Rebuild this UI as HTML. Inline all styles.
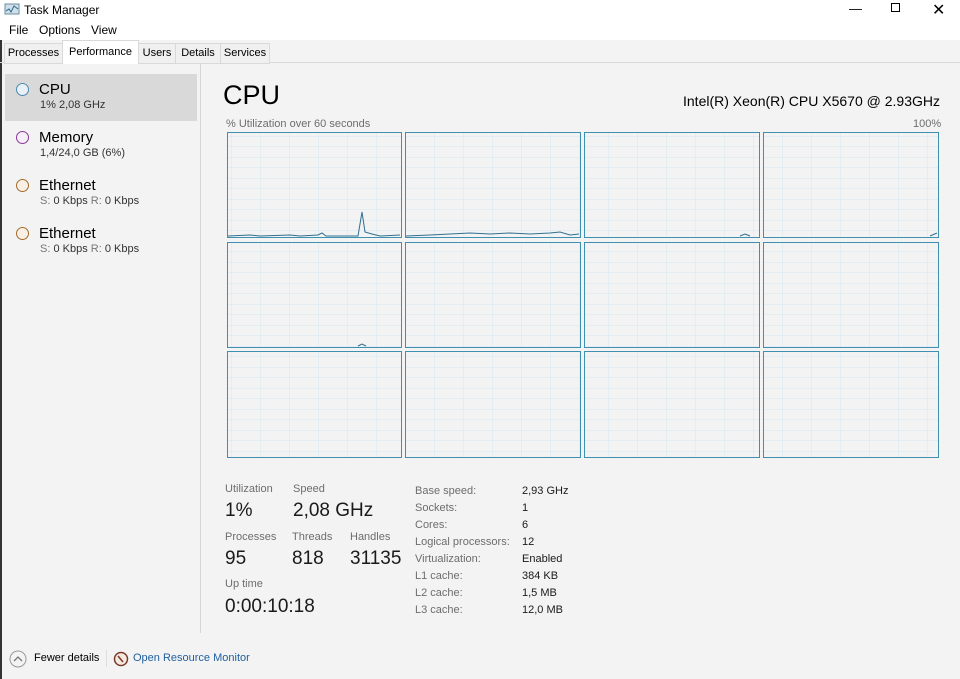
<!DOCTYPE html>
<html><head><meta charset="utf-8"><style>
body{margin:0;width:960px;height:679px;background:#f3f3f3;font-family:"Liberation Sans",sans-serif;position:relative;overflow:hidden;color:#000}
.a{position:absolute;white-space:nowrap}
.g{color:#6d6d6d;font-size:11px}
.v{font-size:19px;color:#1a1a1a}
.k{font-size:11px;color:#6d6d6d}
.kv{font-size:11px;color:#1a1a1a}
.circ{position:absolute;width:11px;height:11px;border-radius:50%;border:1px solid}
</style></head><body>
<div class="a" style="left:0;top:0;width:2px;height:679px;background:#333"></div>
<div class="a" style="left:0;top:0;width:960px;height:40px;background:#fff"></div>
<svg class="a" style="left:4px;top:3px" width="16" height="14"><rect x="1" y="1" width="14" height="10" fill="#cfe0ea" stroke="#6a8ca0"/><polyline points="2,8 5,6 7,9 10,3 14,6" fill="none" stroke="#2a6a8a"/></svg>
<div class="a" style="left:24px;top:3px;font-size:12px">Task Manager</div>
<div class="a" style="left:849px;top:1px;font-size:13px">&#8212;</div>
<div class="a" style="left:891px;top:3px;width:7px;height:7px;border:1px solid #000"></div>
<div class="a" style="left:932px;top:0px;font-size:16px">&#10005;</div>
<div class="a" style="left:9px;top:23px;font-size:12px">File</div>
<div class="a" style="left:39px;top:23px;font-size:12px">Options</div>
<div class="a" style="left:91px;top:23px;font-size:12px">View</div>
<div class="a" style="left:0;top:62px;width:960px;height:1px;background:#d9d9d9"></div>
<div class="a" style="left:4px;top:43px;width:57px;height:19px;background:#f0f0f0;border:1px solid #d9d9d9;font-size:11px;line-height:19px;text-align:center">Processes</div>
<div class="a" style="left:62px;top:40px;width:75px;height:23px;background:#fff;border:1px solid #d9d9d9;border-bottom:none;font-size:11px;line-height:22px;text-align:center">Performance</div>
<div class="a" style="left:138px;top:43px;width:36px;height:19px;background:#f0f0f0;border:1px solid #d9d9d9;font-size:11px;line-height:19px;text-align:center">Users</div>
<div class="a" style="left:175px;top:43px;width:44px;height:19px;background:#f0f0f0;border:1px solid #d9d9d9;font-size:11px;line-height:19px;text-align:center">Details</div>
<div class="a" style="left:220px;top:43px;width:48px;height:19px;background:#f0f0f0;border:1px solid #d9d9d9;font-size:11px;line-height:19px;text-align:center">Services</div>
<div class="a" style="left:200px;top:63px;width:1px;height:570px;background:#d6d6d6"></div>
<div class="a" style="left:5px;top:74px;width:192px;height:47px;background:#d9d9d9"></div>
<div class="circ" style="left:16px;top:83px;border-color:#4a8ab0;background:#e8f0f6"></div>
<div class="a" style="left:39px;top:81px;font-size:15px">CPU</div>
<div class="a" style="left:40px;top:99px;font-size:11px;color:#333">1% 2,08 GHz</div>
<div class="circ" style="left:16px;top:131px;border-color:#8b3a9a;background:#f6eef8"></div>
<div class="a" style="left:39px;top:129px;font-size:15px">Memory</div>
<div class="a" style="left:40px;top:147px;font-size:11px;color:#333">1,4/24,0 GB (6%)</div>
<div class="circ" style="left:16px;top:179px;border-color:#a66a2a;background:#f8f0e6"></div>
<div class="a" style="left:39px;top:177px;font-size:15px">Ethernet</div>
<div class="a" style="left:40px;top:195px;font-size:11px;color:#333"><span style="color:#777">S:</span> 0 Kbps <span style="color:#777">R:</span> 0 Kbps</div>
<div class="circ" style="left:16px;top:227px;border-color:#a66a2a;background:#f8f0e6"></div>
<div class="a" style="left:39px;top:225px;font-size:15px">Ethernet</div>
<div class="a" style="left:40px;top:243px;font-size:11px;color:#333"><span style="color:#777">S:</span> 0 Kbps <span style="color:#777">R:</span> 0 Kbps</div>
<div class="a" style="left:223px;top:80px;font-size:27px">CPU</div>
<div class="a" style="left:683px;top:93px;font-size:14px">Intel(R) Xeon(R) CPU X5670 @ 2.93GHz</div>
<div class="a g" style="left:226px;top:118px">% Utilization over 60 seconds</div>
<div class="a g" style="left:913px;top:118px">100%</div>
<svg class="a" style="left:0;top:0" width="960" height="679">
<defs><pattern id="p" width="29" height="10.5" patternUnits="userSpaceOnUse"><path d="M29 0V10.5M0 10.5H29" stroke="#d6e8f0" stroke-width="1" fill="none"/></pattern></defs>
<g fill="url(#p)" stroke="#3f8fb0" stroke-width="1">
<rect x="227.5" y="132.5" width="174" height="105"/><rect x="405.5" y="132.5" width="175" height="105"/><rect x="584.5" y="132.5" width="175" height="105"/><rect x="763.5" y="132.5" width="175" height="105"/>
<rect x="227.5" y="242.5" width="174" height="105"/><rect x="405.5" y="242.5" width="175" height="105"/><rect x="584.5" y="242.5" width="175" height="105"/><rect x="763.5" y="242.5" width="175" height="105"/>
<rect x="227.5" y="351.5" width="174" height="106"/><rect x="405.5" y="351.5" width="175" height="106"/><rect x="584.5" y="351.5" width="175" height="106"/><rect x="763.5" y="351.5" width="175" height="106"/>
</g>
<g fill="none" stroke="#2f7090" stroke-width="1">
<polyline points="228,236 250,235 260,236 290,235 300,236 318,235 322,233 326,236 358,236 362,212 365,232 372,234 380,236 400,235"/>
<polyline points="406,236 430,235 450,234 470,233 490,234 510,233 530,234 550,233 560,232 570,235 579,234"/>
<polyline points="740,236 745,234 750,236"/><polyline points="930,236 937,233"/>
<polyline points="358,346 362,344 366,346"/>
</g>
</svg>
<div class="a g" style="left:225px;top:483px">Utilization</div>
<div class="a g" style="left:293px;top:483px">Speed</div>
<div class="a v" style="left:225px;top:500px">1%</div>
<div class="a v" style="left:293px;top:500px">2,08 GHz</div>
<div class="a g" style="left:225px;top:531px">Processes</div>
<div class="a g" style="left:292px;top:531px">Threads</div>
<div class="a g" style="left:350px;top:531px">Handles</div>
<div class="a v" style="left:225px;top:548px">95</div>
<div class="a v" style="left:292px;top:548px">818</div>
<div class="a v" style="left:350px;top:548px">31135</div>
<div class="a g" style="left:225px;top:578px">Up time</div>
<div class="a v" style="left:225px;top:596px">0:00:10:18</div>
<div class="a k" style="left:415px;top:483px;line-height:17px">Base speed:<br>Sockets:<br>Cores:<br>Logical processors:<br>Virtualization:<br>L1 cache:<br>L2 cache:<br>L3 cache:</div>
<div class="a kv" style="left:522px;top:483px;line-height:17px">2,93 GHz<br>1<br>6<br>12<br>Enabled<br>384 KB<br>1,5 MB<br>12,0 MB</div>
<svg class="a" style="left:9px;top:650px" width="18" height="18"><circle cx="9" cy="9" r="8" fill="none" stroke="#999"/><polyline points="5,11 9,7 13,11" fill="none" stroke="#777" stroke-width="1.3"/></svg>
<div class="a" style="left:34px;top:652px;font-size:11px">Fewer details</div>
<div class="a" style="left:106px;top:650px;width:1px;height:17px;background:#ddd"></div>
<svg class="a" style="left:113px;top:651px" width="16" height="16"><circle cx="8" cy="8" r="6.5" fill="#f4e8e0" stroke="#7a3a2a" stroke-width="1.5"/><line x1="5" y1="5" x2="10" y2="11" stroke="#7a3a2a" stroke-width="1.5"/></svg>
<div class="a" style="left:133px;top:652px;font-size:11px;color:#1f5f9f">Open Resource Monitor</div>
</body></html>
